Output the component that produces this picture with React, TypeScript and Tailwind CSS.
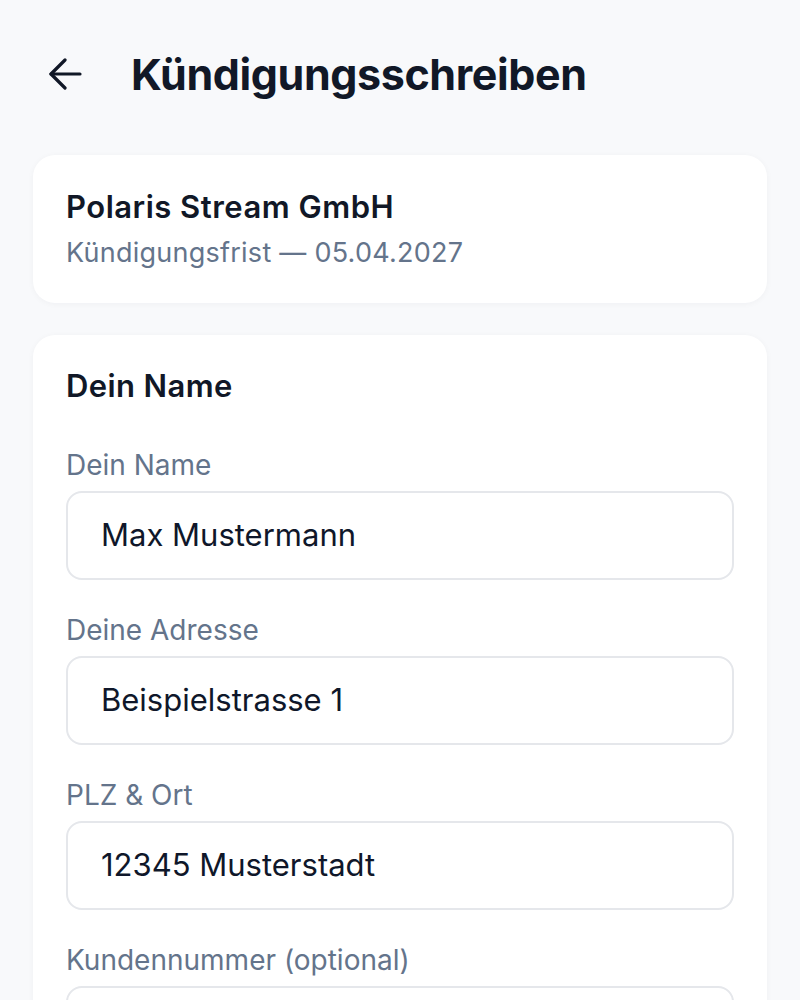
import React from "react";

const fields = [
  { label: "Dein Name", value: "Max Mustermann" },
  { label: "Deine Adresse", value: "Beispielstrasse 1" },
  { label: "PLZ & Ort", value: "12345 Musterstadt" },
  { label: "Kundennummer (optional)", value: "" },
];

export default function App() {
  return (
    <div
      className="min-h-[1000px] bg-[#f8f9fb] pt-[54px] text-[#111827]"
      style={{ fontFamily: "Inter, 'Noto Sans', sans-serif" }}
    >
      <div className="flex items-center h-[40px] pl-[48px]">
        <svg width="34" height="32" viewBox="0 0 34 32" fill="none" stroke="#111827" strokeWidth="3.2" strokeLinecap="round" strokeLinejoin="round">
          <path d="M32 16H3" />
          <path d="M17 2L3 16L17 30" />
        </svg>
        <h1 className="ml-[49px] text-[43px] font-bold tracking-[-0.4px] leading-[40px] text-[#111827]">
          Kündigungsschreiben
        </h1>
      </div>

      <div className="mx-[33px] mt-[61px] rounded-[22px] bg-white px-[33px] pt-[34px] pb-[32px] shadow-[0_1px_6px_rgba(15,23,42,0.04)]">
        <div className="text-[31px] font-semibold leading-[36px] tracking-[0.5px] text-[#111827]">Polaris Stream GmbH</div>
        <div className="mt-[10px] text-[27px] leading-[36px] tracking-[0.25px] text-[#64748b]">Kündigungsfrist — 05.04.2027</div>
      </div>

      <div className="mx-[33px] mt-[32px] rounded-[22px] bg-white px-[33px] pt-[33px] pb-[40px] shadow-[0_1px_6px_rgba(15,23,42,0.04)]">
        <div className="text-[31px] font-semibold leading-[36px] tracking-[0.4px] text-[#111827]">Dein Name</div>
        <div className="mt-[45px] flex flex-col gap-[34px]">
          {fields.map((f) => (
            <div key={f.label} className="flex flex-col">
              <label className="text-[28px] leading-[32px] text-[#64748b]">{f.label}</label>
              <div className="mt-[10px] flex h-[89px] items-center rounded-[16px] border-2 border-[#e5e7eb] bg-white px-[33px]">
                <span className="text-[31px] text-[#0f172a]">{f.value}</span>
              </div>
            </div>
          ))}
        </div>
      </div>
    </div>
  );
}
